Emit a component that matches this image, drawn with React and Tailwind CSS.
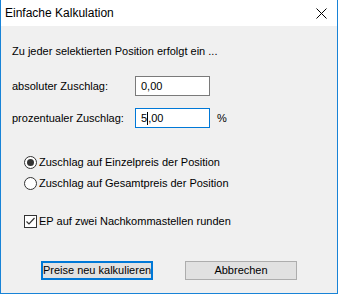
import React from 'react';

const font = { fontFamily: '"Liberation Sans", Arial, sans-serif' };

const Radio = ({ checked, label, className = '' }) => (
  <div className={`flex items-center h-[16px] ${className}`}>
    <span className="w-[13px] h-[13px] rounded-full border border-[#333333] bg-white flex items-center justify-center ml-[12px]">
      {checked && <span className="w-[7px] h-[7px] rounded-full bg-[#333333]" />}
    </span>
    <span className="ml-[2px]">{label}</span>
  </div>
);

const Checkbox = ({ checked, label, className = '' }) => (
  <div className={`flex items-center h-[16px] ${className}`}>
    <span className="w-[13px] h-[13px] border border-[#333333] bg-white flex items-center justify-center ml-[12px]">
      {checked && (
        <svg width="11" height="11" viewBox="0 0 11 11">
          <path d="M1.5 5.5 L4 8 L9.5 2" fill="none" stroke="#333333" strokeWidth="1.2" />
        </svg>
      )}
    </span>
    <span className="ml-[2px]">{label}</span>
  </div>
);

export default function App() {
  return (
    <div className="w-[338px] h-[294px] flex flex-col border-x border-b border-[#1883d7] text-black" style={font}>
      <div className="h-[26px] bg-white flex items-center justify-between pl-[4px] pr-[10px]">
        <span className="text-[12px]">Einfache Kalkulation</span>
        <svg width="11" height="11" viewBox="0 0 11 11">
          <path d="M0.5 0.5 L10.5 10.5 M10.5 0.5 L0.5 10.5" stroke="#000" strokeWidth="1" />
        </svg>
      </div>
      <div className="flex-1 bg-[#f0f0f0] pl-[11px] pt-[19px] text-[11px] leading-[13px]">
        <div className="h-[13px]">Zu jeder selektierten Position erfolgt ein ...</div>

        <div className="mt-[18px] h-[20px] flex items-center">
          <span className="w-[123px]">absoluter Zuschlag:</span>
          <div className="w-[75px] h-[20px] border border-[#7a7a7a] bg-white pl-[5px] flex items-center">0,00</div>
        </div>

        <div className="mt-[12px] h-[20px] flex items-center">
          <span className="w-[123px]">prozentualer Zuschlag:</span>
          <div className="w-[75px] h-[20px] border border-[#0078d7] bg-white pl-[5px] flex items-center">
            5<span className="inline-block w-[1px] h-[13px] bg-black" />,00
          </div>
          <span className="ml-[7px]">%</span>
        </div>

        <Radio checked label="Zuschlag auf Einzelpreis der Position" className="mt-[26px]" />
        <Radio label="Zuschlag auf Gesamtpreis der Position" className="mt-[5px]" />

        <Checkbox checked label="EP auf zwei Nachkommastellen runden" className="mt-[22px]" />

        <div className="mt-[32px] flex">
          <button className="ml-[29px] w-[112px] h-[19px] border-2 border-[#0078d7] bg-[#e1e1e1] flex items-center justify-center whitespace-nowrap text-[11px] leading-[13px]">
            Preise neu kalkulieren
          </button>
          <button className="ml-[32px] w-[112px] h-[19px] border border-[#adadad] bg-[#e1e1e1] flex items-center justify-center whitespace-nowrap text-[11px] leading-[13px]">
            Abbrechen
          </button>
        </div>
      </div>
    </div>
  );
}
